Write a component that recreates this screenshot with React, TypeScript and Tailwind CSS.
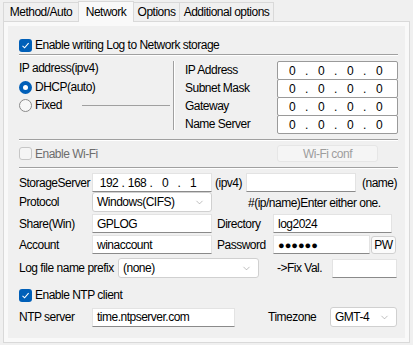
import { ChevronDown } from "lucide-react";

const font = { fontFamily: '"Liberation Sans", Arial, sans-serif' };

function Check({ checked, disabled }: { checked?: boolean; disabled?: boolean }) {
  if (checked)
    return (
      <span className="w-[13px] h-[13px] rounded-[3px] bg-[#005fb8] flex items-center justify-center shrink-0">
        <svg width="9" height="9" viewBox="0 0 9 9">
          <path d="M1.5 4.8 L3.6 6.8 L7.6 2.2" fill="none" stroke="white" strokeWidth="1.1" />
        </svg>
      </span>
    );
  return (
    <span
      className={`w-[13px] h-[13px] rounded-[3px] border shrink-0 ${
        disabled ? "border-[#c6c6c6] bg-[#f5f5f5]" : "border-[#8a8a8a] bg-white"
      }`}
    />
  );
}

function Radio({ checked }: { checked?: boolean }) {
  if (checked)
    return (
      <span className="w-[13px] h-[13px] rounded-full bg-[#005fb8] flex items-center justify-center shrink-0">
        <span className="w-[5px] h-[5px] rounded-full bg-white" />
      </span>
    );
  return <span className="w-[13px] h-[13px] rounded-full border border-[#8a8a8a] bg-[#f7f7f7] shrink-0" />;
}

function Sep() {
  return (
    <div className="w-[379px]">
      <div className="h-px bg-[#a0a0a0]" />
      <div className="h-px bg-white" />
    </div>
  );
}

function Input({ w, value, className = "" }: { w: string; value?: string; className?: string }) {
  return (
    <div
      className={`${w} h-[19px] bg-white border border-[#e3e3e3] border-b-[#8a8a8a] flex items-center pl-[4px] shrink-0 ${className}`}
    >
      {value}
    </div>
  );
}

function Select({ w, value }: { w: string; value: string }) {
  return (
    <div
      className={`${w} h-[20px] bg-white border border-[#d0d0d0] rounded-[3px] flex items-center justify-between pl-[4px] pr-[6px] shrink-0`}
    >
      <span>{value}</span>
      <ChevronDown size={11} strokeWidth={1.2} color="#8a8a8a" />
    </div>
  );
}

function IpField() {
  return (
    <div className="w-[121px] h-[19px] bg-white border border-[#9a9a9a] rounded-[2px] flex items-center pl-[10px]">
      {[0, 1, 2, 3].map((i) => (
        <div key={i} className="flex items-center">
          {i > 0 && <span className="w-[21px] text-center">.</span>}
          <span className="w-[8px] text-center">0</span>
        </div>
      ))}
    </div>
  );
}

export default function App() {
  const tabs = [
    { t: "Method/Auto", w: "w-[76px]" },
    { t: "Network", w: "w-[56px]" },
    { t: "Options", w: "w-[47px]" },
    { t: "Additional options", w: "w-[95px]" },
  ];
  return (
    <div
      style={font}
      className="w-[413px] h-[345px] bg-[#f0f0f0] text-[12px] leading-[14px] tracking-[-0.5px] text-black whitespace-nowrap flex flex-col overflow-hidden"
    >
      <div className="h-[21px] flex items-end pl-[3px]">
        {tabs.map(({ t, w }) =>
          t === "Network" ? (
            <div
              key={t}
              className={`${w} relative z-10 h-[21px] -mb-px -ml-px bg-[#f9f9f9] border border-b-0 border-[#d9d9d9] flex justify-center pt-[3px]`}
            >
              {t}
            </div>
          ) : (
            <div
              key={t}
              className={`${w} h-[19px] border border-[#d9d9d9] border-b-0 -ml-px first:ml-0 flex items-center justify-center bg-[#f0f0f0]`}
            >
              {t}
            </div>
          )
        )}
      </div>
      <div className="mx-[3px] h-[322px] border border-[#d9d9d9] bg-[#f9f9f9] p-[4px]">
        <div className="h-full bg-[#f0f0f0] pl-[11px] flex flex-col">
          <div className="mt-[12px] h-[14px] flex items-center gap-[3px]">
            <Check checked />
            <span>Enable writing Log to Network storage</span>
          </div>
          <div className="mt-[2px]">
            <Sep />
          </div>

          <div className="mt-[5px] h-[73px] flex">
            <div className="w-[154px] flex flex-col">
              <div className="h-[14px] flex items-center">IP address(ipv4)</div>
              <div className="mt-[5px] h-[14px] flex items-center gap-[3px]">
                <Radio checked />
                <span>DHCP(auto)</span>
              </div>
              <div className="mt-[4px] h-[14px] flex items-center gap-[3px]">
                <Radio />
                <span className="w-[44px]">Fixed</span>
                <div className="w-[88px] h-px bg-[#a0a0a0]" />
              </div>
            </div>
            <div className="h-[69px] w-px bg-[#a0a0a0]" />
            <div className="h-[69px] w-px bg-white" />
            <div className="ml-[10px] flex flex-col">
              {["IP Address", "Subnet Mask", "Gateway", "Name Server"].map((l, i) => (
                <div key={l} className={`flex items-center ${i > 0 ? "-mt-px" : ""}`}>
                  <span className="w-[92px] pb-[2px]">{l}</span>
                  <IpField />
                </div>
              ))}
            </div>
          </div>

          <div className="mt-[5px]">
            <Sep />
          </div>
          <div className="mt-[4px] h-[17px] flex items-center">
            <div className="w-[258px] flex items-center gap-[3px]">
              <Check disabled />
              <span className="text-[#6d6d6d]">Enable Wi-Fi</span>
            </div>
            <div className="w-[101px] h-[17px] rounded-[3px] bg-[#f5f5f5] border border-[#e6e6e6] flex items-center justify-center text-[#9d9d9d]">
              Wi-Fi conf
            </div>
          </div>
          <div className="mt-[5px]">
            <Sep />
          </div>

          <div className="mt-[4px] flex items-center">
            <span className="w-[73px]">StorageServer</span>
            <div className="w-[120px] h-[19px] bg-white border border-[#e3e3e3] border-b-[#8a8a8a] flex items-center pl-[6px]">
              {["192", "168", "0", "1"].map((s, i) => (
                <div key={i} className="flex items-center">
                  {i > 0 && <span className="w-[8px] text-center">.</span>}
                  <span className="w-[20px] text-center">{s}</span>
                </div>
              ))}
            </div>
            <span className="ml-[3px] w-[31px]">(ipv4)</span>
            <Input w="w-[110px]" />
            <span className="ml-[6px]">(name)</span>
          </div>
          <div className="flex items-center">
            <span className="w-[73px]">Protocol</span>
            <Select w="w-[120px]" value="Windows(CIFS)" />
            <span className="ml-[36px] pt-[1px]">#(ip/name)Enter either one.</span>
          </div>
          <div className="mt-[2px] flex items-center">
            <span className="w-[73px]">Share(Win)</span>
            <Input w="w-[120px]" value="GPLOG" />
            <span className="ml-[5px] w-[56px]">Directory</span>
            <Input w="w-[119px]" value="log2024" />
          </div>
          <div className="mt-[2px] flex items-center">
            <span className="w-[73px]">Account</span>
            <Input w="w-[120px]" value="winaccount" />
            <span className="ml-[5px] w-[56px]">Password</span>
            <Input w="w-[97px]" value="●●●●●●" className="text-[11px] tracking-[0px]" />
            <div className="ml-[1px] w-[25px] h-[18px] bg-[#fbfbfb] border border-[#d0d0d0] rounded-[3px] flex items-center justify-center">
              PW
            </div>
          </div>
          <div className="mt-[4px] flex items-center">
            <span className="w-[99px]">Log file name prefix</span>
            <Select w="w-[141px]" value="(none)" />
            <span className="ml-[18px] w-[55px]">-&gt;Fix Val.</span>
            <Input w="w-[65px]" />
          </div>

          <div className="mt-[10px] h-[14px] flex items-center gap-[3px]">
            <Check checked />
            <span>Enable NTP client</span>
          </div>
          <div className="mt-[5px] flex items-center">
            <span className="w-[73px]">NTP server</span>
            <Input w="w-[143px]" value="time.ntpserver.com" />
            <span className="ml-[33px] w-[62px]">Timezone</span>
            <Select w="w-[67px]" value="GMT-4" />
          </div>
        </div>
      </div>
    </div>
  );
}
